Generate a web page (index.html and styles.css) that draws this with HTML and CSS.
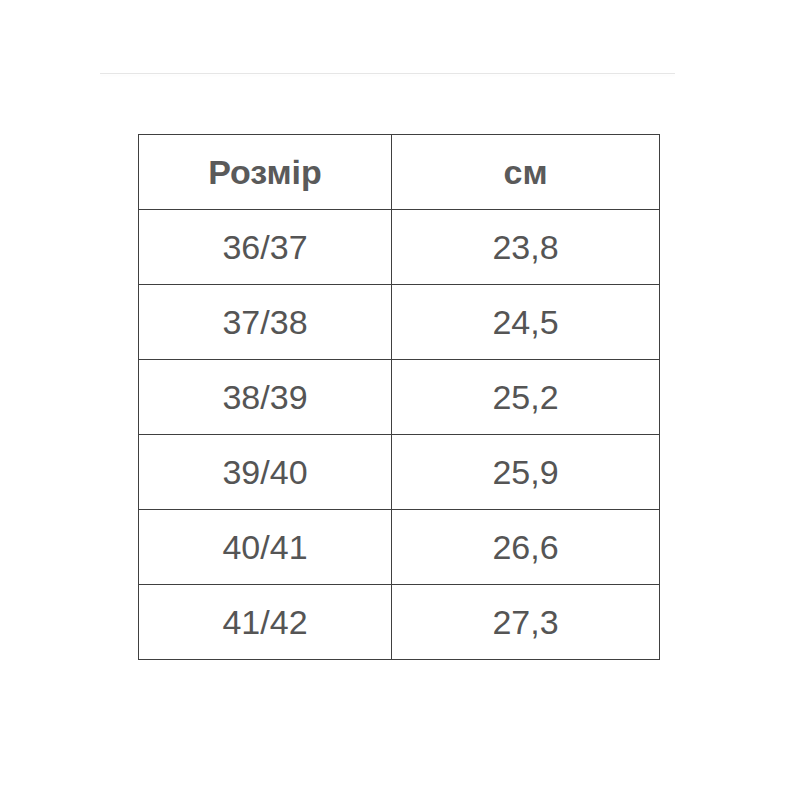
FILE: index.html
```html
<!DOCTYPE html>
<html lang="uk">
<head>
<meta charset="utf-8">
<link rel="stylesheet" href="styles.css">
</head>
<body>
<div class="page">
  <div class="rule"></div>
  <table class="sizes">
    <thead>
      <tr><th class="c1">Розмір</th><th class="c2">см</th></tr>
    </thead>
    <tbody>
      <tr><td>36/37</td><td>23,8</td></tr>
      <tr><td>37/38</td><td>24,5</td></tr>
      <tr><td>38/39</td><td>25,2</td></tr>
      <tr><td>39/40</td><td>25,9</td></tr>
      <tr><td>40/41</td><td>26,6</td></tr>
      <tr><td>41/42</td><td>27,3</td></tr>
    </tbody>
  </table>
</div>
</body>
</html>
```

FILE: styles.css
```css
html, body {
  margin: 0;
  padding: 0;
  background: #fff;
}
.page {
  width: 800px;
  height: 800px;
  padding-top: 73px;
  box-sizing: border-box;
  font-family: "Liberation Sans", Arial, sans-serif;
  color: #555;
}
.rule {
  margin-left: 100px;
  width: 575px;
  height: 1px;
  background: #e6e6e6;
  box-shadow: 0 2px 3px rgba(0,0,0,0.03);
}
.sizes {
  margin-top: 60px;
  margin-left: 138px;
  border-collapse: collapse;
  table-layout: fixed;
  width: 520px;
}
.sizes th,
.sizes td {
  border: 1px solid #404040;
  height: 74px;
  padding: 0;
  text-align: center;
  vertical-align: middle;
  font-size: 34px;
  line-height: 1;
}
.sizes th {
  font-weight: bold;
  color: #5a5a5a;
}
.sizes .c1 { width: 252px; }
.sizes .c2 { width: 267px; }
```
